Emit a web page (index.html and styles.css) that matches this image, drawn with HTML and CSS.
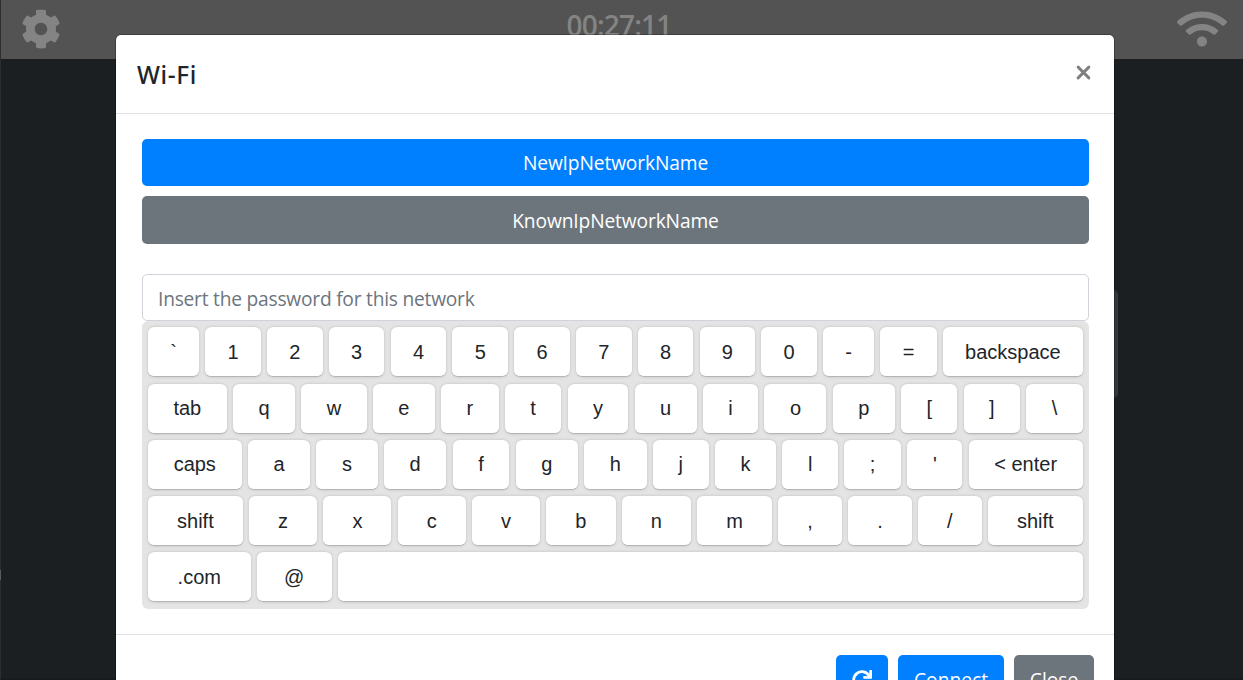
FILE: index.html
```html
<!DOCTYPE html>
<html lang="en">
<head>
<meta charset="utf-8">
<title>Wi-Fi</title>
<link rel="stylesheet" href="styles.css">
</head>
<body>
<div class="page">
  <header class="topbar">
    <svg class="gear" viewBox="0 0 512 512"><path fill="currentColor" d="M487.4 315.7l-42.6-24.6c4.3-23.2 4.3-47 0-70.2l42.6-24.6c4.9-2.8 7.1-8.6 5.500-14-11.100-35.600-30-67.800-54.700-94.600-3.800-4.100-10-5.100-14.800-2.300L380.800 110c-17.900-15.400-38.500-27.300-60.800-35.100V25.800c0-5.600-3.900-10.500-9.400-11.700-36.700-8.200-74.300-7.800-109.200 0-5.500 1.200-9.400 6.100-9.400 11.700V75c-22.200 7.900-42.800 19.800-60.800 35.100L88.700 85.500c-4.900-2.800-11-1.900-14.800 2.300-24.700 26.700-43.600 58.900-54.700 94.600-1.700 5.400.6 11.200 5.500 14L67.300 221c-4.300 23.200-4.300 47 0 70.200l-42.600 24.600c-4.900 2.800-7.100 8.600-5.500 14 11.100 35.600 30 67.800 54.700 94.600 3.800 4.100 10 5.100 14.800 2.300l42.600-24.600c17.900 15.400 38.500 27.300 60.800 35.100v49.200c0 5.600 3.900 10.500 9.400 11.700 36.700 8.200 74.300 7.800 109.200 0 5.500-1.200 9.400-6.100 9.400-11.700v-49.200c22.200-7.900 42.800-19.800 60.800-35.100l42.600 24.600c4.900 2.800 11 1.900 14.800-2.300 24.700-26.700 43.600-58.900 54.700-94.600 1.500-5.500-.7-11.300-5.600-14.100zM256 336c-44.100 0-80-35.900-80-80s35.900-80 80-80 80 35.900 80 80-35.900 80-80 80z"/></svg>
    <span class="clock">00:27:11</span>
    <svg class="wifi" viewBox="0 0 640 512"><path fill="currentColor" d="M634.910 154.880C457.740-8.990 182.190-8.930 5.090 154.880c-6.660 6.160-6.790 16.590-.35 22.980l34.240 33.970c6.140 6.100 16.020 6.230 22.400.38 145.920-133.680 371.300-133.710 517.250 0 6.380 5.850 16.260 5.710 22.400-.38l34.240-33.970c6.430-6.390 6.300-16.820-.36-22.980zM320 352c-35.350 0-64 28.650-64 64s28.650 64 64 64 64-28.650 64-64-28.650-64-64-64zm202.670-83.590c-115.260-101.930-290.210-101.820-405.340 0-6.900 6.100-7.120 16.690-.57 23.150l34.440 33.990c6 5.920 15.660 6.320 22.050.8 83.950-72.570 209.740-72.410 293.490 0 6.390 5.520 16.050 5.130 22.050-.8l34.440-33.990c6.560-6.460 6.330-17.060-.56-23.150z"/></svg>
  </header>
  <div class="panel-edge"></div>
  <div class="tick"></div>
</div>

<section class="modal">
  <div class="modal-header">
    <h5 class="title">Wi-Fi</h5>
    <svg class="dismiss" viewBox="0 0 14 14"><path d="M2 2L12 12M12 2L2 12" stroke="currentColor" stroke-width="2.700" stroke-linecap="round"/></svg>
  </div>
  <div class="modal-body">
    <div class="btn network primary"><span>NewIpNetworkName</span></div>
    <div class="btn network secondary"><span>KnownIpNetworkName</span></div>
    <div class="field"><span>Insert the password for this network</span></div>
    <div class="keyboard">
      <div class="row"><div class="key">`</div><div class="key">1</div><div class="key">2</div><div class="key">3</div><div class="key">4</div><div class="key">5</div><div class="key">6</div><div class="key">7</div><div class="key">8</div><div class="key">9</div><div class="key">0</div><div class="key">-</div><div class="key">=</div><div class="key">backspace</div></div>
      <div class="row"><div class="key">tab</div><div class="key">q</div><div class="key">w</div><div class="key">e</div><div class="key">r</div><div class="key">t</div><div class="key">y</div><div class="key">u</div><div class="key">i</div><div class="key">o</div><div class="key">p</div><div class="key">[</div><div class="key">]</div><div class="key">\</div></div>
      <div class="row"><div class="key">caps</div><div class="key">a</div><div class="key">s</div><div class="key">d</div><div class="key">f</div><div class="key">g</div><div class="key">h</div><div class="key">j</div><div class="key">k</div><div class="key">l</div><div class="key">;</div><div class="key">'</div><div class="key">&lt; enter</div></div>
      <div class="row"><div class="key">shift</div><div class="key">z</div><div class="key">x</div><div class="key">c</div><div class="key">v</div><div class="key">b</div><div class="key">n</div><div class="key">m</div><div class="key">,</div><div class="key">.</div><div class="key">/</div><div class="key">shift</div></div>
      <div class="row"><div class="key key-com">.com</div><div class="key key-at">@</div><div class="key"></div></div>
    </div>
  </div>
  <div class="modal-footer">
    <div class="btn primary refresh"><svg class="redo" viewBox="0 0 512 512"><path fill="currentColor" d="M500.330 0h-47.410a12 12 0 0 0-12 12.570l4 82.760A247.420 247.420 0 0 0 256 8C119.340 8 7.900 119.530 8 256.190 8.100 393.070 119.100 504 256 504a247.100 247.100 0 0 0 166.180-63.910 12 12 0 0 0 .48-17.430l-34-34a12 12 0 0 0-16.380-.55A176 176 0 1 1 402.100 157.800l-101.530-4.870a12 12 0 0 0-12.570 12v47.410a12 12 0 0 0 12 12h200.330a12 12 0 0 0 12-12V12a12 12 0 0 0-12-12z"/></svg></div>
    <div class="btn primary connect"><span>Connect</span></div>
    <div class="btn secondary close"><span>Close</span></div>
  </div>
</section>
</body>
</html>
```
FILE: styles.css
```css
* { box-sizing: border-box; }
body {
  margin: 0;
  height: 680px;
  overflow: hidden;
  position: relative;
  background: #1b1f22;
  color: #212529;
  font: 19.2px/30px "Open Sans", sans-serif;
}
.page { height: 680px; border-left: 1px solid #2b2f32; border-bottom: 2px solid #171b1e; }
.topbar {
  height: 59px;
  padding: 0 16px 0 20px;
  display: flex;
  justify-content: space-between;
  align-items: flex-start;
  background: #535353;
  color: #848484;
}
.gear { width: 40px; height: 40px; margin-top: 9px; }
.wifi { width: 50px; height: 40px; margin-top: 9px; }
.clock { font: 600 28px/40px "Open Sans", sans-serif; margin: 5px 0 0; letter-spacing: -0.8px; }
.panel-edge {
  position: absolute;
  left: 1100px;
  top: 290px;
  width: 18px;
  height: 108px;
  border-radius: 5px;
  background: #35393c;
}
.tick { position: absolute; left: 0; top: 570px; width: 1px; height: 10px; background: #5b5b5b; }
.modal {
  position: absolute;
  left: 116px;
  top: 35px;
  width: 998px;
  height: 645px;
  overflow: hidden;
  background: #fff;
  border-radius: 5px 5px 0 0;
  box-shadow: 0 0 0 1px rgba(0, 0, 0, .25);
}
.modal-header {
  height: 79px;
  padding: 21px 23px 0 21px;
  display: flex;
  justify-content: space-between;
  border-bottom: 1px solid #dee2e6;
}
.title { margin: 0; font: 500 24.4px/38px "Noto Sans", sans-serif; letter-spacing: .6px; }
.dismiss { width: 15px; height: 15px; margin-top: 9px; color: #808080; }
.modal-body { height: 521px; padding: 25px 25px 0 26px; border-bottom: 1px solid #dee2e6; }
.btn {
  height: 47.5px;
  border-radius: 5px;
  display: flex;
  justify-content: center;
  align-items: center;
  color: #fff;
}
.primary { background: #0080ff; }
.secondary { background: #6c757b; }
.network { height: 47px; margin-bottom: 10px; letter-spacing: -.13px; }
.network.secondary { height: 48px; padding-top: 2px; }
.field {
  height: 47px;
  margin-top: 30px;
  padding: 9px 15px;
  border: 1px solid #ced4da;
  border-radius: 5px;
  color: #6c757d;
  line-height: 30px;
  letter-spacing: -.23px;
}
.keyboard {
  height: 287.5px;
  padding: 6.25px 6.25px 6.25px 6px;
  display: flex;
  flex-direction: column;
  gap: 6.25px;
  background: #e4e4e4;
  border-radius: 6.25px;
  font: 20px/30px "Liberation Sans", Arial, sans-serif;
}
.row { display: flex; gap: 6.25px; }
.key {
  flex: 1 1 auto;
  height: 50px;
  padding: 6.25px;
  display: flex;
  justify-content: center;
  align-items: center;
  background: #fff;
  border-bottom: 1px solid #b5b5b5;
  border-radius: 6.25px;
  box-shadow: 0 0 3.75px -1.25px rgba(0, 0, 0, .3);
}
.key-com { flex-basis: 102.5px; max-width: 102.5px; }
.key-at { flex-basis: 75px; max-width: 75px; }
.modal-footer { padding: 20px 20px 0; display: flex; justify-content: flex-end; gap: 10px; }
.modal-footer .btn { padding-top: 2px; }
.refresh { width: 52px; }
.redo { width: 20px; height: 20px; }
.connect { width: 106px; }
.close { width: 80px; }
```
